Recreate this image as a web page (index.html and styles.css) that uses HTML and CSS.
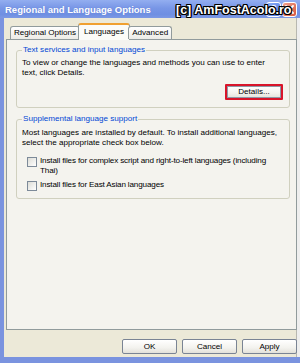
FILE: index.html
```html
<!DOCTYPE html>
<html>
<head>
<meta charset="utf-8">
<link rel="stylesheet" href="styles.css">
</head>
<body>
<div class="window">
  <div class="titlebar">
    <span class="title">Regional and Language Options</span>
    <div class="caption-buttons">
      <span class="cbtn help">?</span>
      <span class="cbtn close">
        <svg width="9" height="9" viewBox="0 0 9 9"><path d="M1 1L8 8M8 1L1 8" stroke="#fff" stroke-width="1.8" stroke-linecap="round"/></svg>
      </span>
    </div>
    <span class="watermark">[c] AmFostAcolo.ro</span>
  </div>
  <div class="frame">
    <div class="client">
      <div class="tabs">
        <span class="tab">Regional Options</span>
        <span class="tab selected">Languages</span>
        <span class="tab">Advanced</span>
      </div>
      <div class="panel">
        <fieldset class="group first">
          <legend>Text services and input languages</legend>
          <p class="text">To view or change the languages and methods you can use to enter text, click Details.</p>
          <div class="group-actions">
            <span class="btn focus">Details...</span>
          </div>
        </fieldset>
        <fieldset class="group second">
          <legend>Supplemental language support</legend>
          <p class="text">Most languages are installed by default. To install additional languages, select the appropriate check box below.</p>
          <div class="check first-check">
            <span class="box"></span>
            <span class="label">Install files for complex script and right-to-left languages (including Thai)</span>
          </div>
          <div class="check">
            <span class="box"></span>
            <span class="label">Install files for East Asian languages</span>
          </div>
        </fieldset>
      </div>
      <div class="dialog-buttons">
        <span class="btn">OK</span>
        <span class="btn">Cancel</span>
        <span class="btn">Apply</span>
      </div>
    </div>
  </div>
</div>
</body>
</html>
```
FILE: styles.css
```css
* { box-sizing: border-box; }
html, body { margin: 0; padding: 0; }
body {
  width: 300px;
  height: 363px;
  overflow: hidden;
  background: #ffffff;
  font-family: "Liberation Sans", Arial, sans-serif;
  font-size: 8.1px;
  color: #000;
}
.window {
  width: 300px;
  height: 363px;
  display: flex;
  flex-direction: column;
}
.titlebar {
  position: relative;
  height: 18px;
  flex: none;
  background: linear-gradient(#93aef0, #7896e6 45%, #6f8fe2 80%, #7c98e4);
  display: flex;
  align-items: center;
  padding-left: 5px;
}
.title {
  color: #fff;
  font-weight: bold;
  font-size: 9.5px;
  text-shadow: 0 0 1px #5a78d0;
}
.caption-buttons {
  margin-left: auto;
  display: flex;
  gap: 1px;
  padding-right: 3px;
}
.cbtn {
  width: 15px;
  height: 15px;
  border-radius: 3px;
  border: 1px solid #fff;
  display: flex;
  align-items: center;
  justify-content: center;
  color: #fff;
  font-weight: bold;
  font-size: 10px;
}
.help { background: linear-gradient(135deg, #8fb0f6, #4f78e0); }
.close { background: linear-gradient(135deg, #f0a08c, #d8583c); }
.watermark {
  position: absolute;
  left: 176px;
  top: 3px;
  color: #fff;
  font-weight: bold;
  font-size: 12.5px;
  line-height: 15px;
  text-shadow: 1px 0 0 #000, -1px 0 0 #000, 0 1px 0 #000, 0 -1px 0 #000, 1px 1px 0 #000, -1px -1px 0 #000, 1px -1px 0 #000, -1px 1px 0 #000;
}
.frame {
  flex: 1;
  display: flex;
  background: #7a93df;
  padding: 0 0 6px 4px;
}
.client {
  flex: 1;
  background: #ece9d8;
  border-right: 3px solid #eeeeee;
  box-shadow: inset -1px 0 #b8b8b0;
  padding-top: 5px;
  display: flex;
  flex-direction: column;
}
.tabs {
  display: flex;
  align-items: flex-end;
  height: 17px;
  margin-left: 6px;
  margin-bottom: -1px;
  position: relative;
  z-index: 1;
}
.tab {
  height: 13px;
  line-height: 11px;
  padding: 0 3px;
  border: 1px solid #919b9c;
  border-bottom: none;
  border-radius: 3px 3px 0 0;
  background: linear-gradient(#ffffff, #ecebe6);
  margin-bottom: 1px;
}
.tab + .tab { margin-left: -1px; }
.tab.selected {
  height: 17px;
  margin: 0 -1px 0 -2px;
  padding: 0 5px;
  line-height: 13px;
  border-top: 2px solid #f0a030;
  background: #fbfbf8;
  margin-bottom: 0;
}
.panel {
  height: 291px;
  margin-left: 2px;
  border: 1px solid #919b9c;
  background: #f4f3ee;
  padding: 5px 6px 0 9px;
}
.group {
  margin: 0;
  border: 1px solid #d0d0bf;
  border-radius: 3px;
  padding: 0 6px 7px 5px;
}
.group legend {
  padding: 0 1px;
  color: #0046d5;
  line-height: 10px;
}
.group.second { margin-top: 6px; padding-bottom: 7px; }
.text {
  margin: 3px 0 0 0;
  line-height: 10px;
  max-width: 257px;
}
.second .text { margin-top: 4px; }
.group-actions {
  display: flex;
  justify-content: flex-end;
  margin-top: 6px;
}
.btn {
  width: 55px;
  height: 15px;
  border: 1px solid #7a8494;
  border-radius: 2px;
  background: linear-gradient(#ffffff, #f3f2ee 60%, #e2e1da);
  display: flex;
  align-items: center;
  justify-content: center;
  line-height: 10px;
}
.btn.focus {
  width: 58px;
  height: 16px;
  border: 2px solid #d8142a;
  border-radius: 1px;
  box-shadow: inset 0 0 0 1px #8e98a6;
}
.check {
  display: flex;
  gap: 3px;
  margin: 4px 0 0 5px;
}
.check.first-check { margin-top: 8px; }
.box {
  flex: none;
  width: 10px;
  height: 10px;
  margin-top: 1px;
  border: 1px solid #7d8a99;
  background: linear-gradient(135deg, #dcdcd6, #ffffff);
}
.label {
  line-height: 10px;
  letter-spacing: -0.15px;
}
.dialog-buttons {
  display: flex;
  justify-content: flex-end;
  gap: 5px;
  margin-top: 9px;
}
```
